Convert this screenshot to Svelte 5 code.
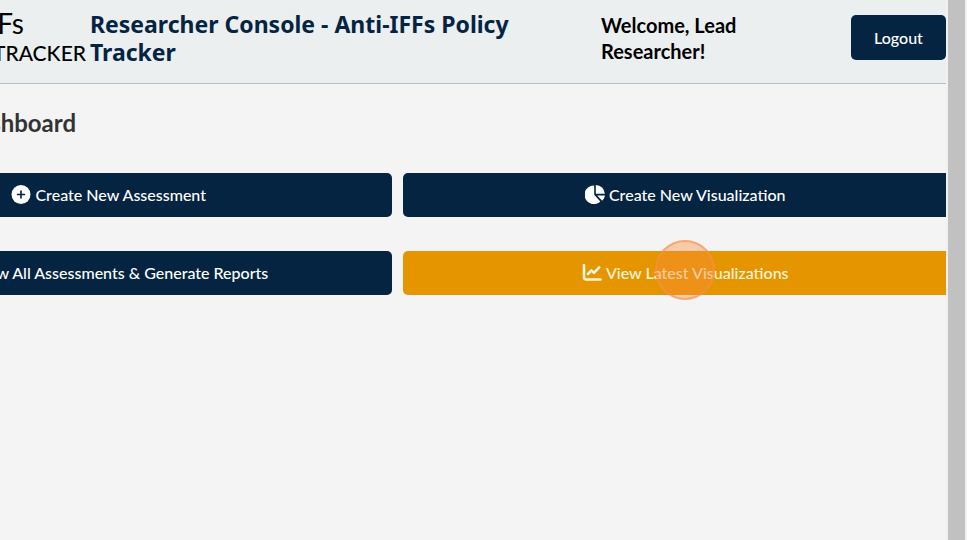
<script>
  const actions = [
    { id: 'create', label: 'Create New Assessment', icon: 'plus' },
    { id: 'visualize', label: 'Create New Visualization', icon: 'pie' },
    { id: 'reports', label: 'View All Assessments & Generate Reports', icon: 'list' },
    { id: 'latest', label: 'View Latest Visualizations', icon: 'line' },
  ];

  let active = $state('latest');
</script>

<div class="screen">
  <div class="viewport">
    <header>
      <div class="logo">
        <span class="logo-top">IFFs</span>
        <span class="logo-bottom">TRACKER</span>
      </div>
      <h1>Researcher Console - Anti-IFFs Policy Tracker</h1>
      <p class="welcome">Welcome, Lead Researcher!</p>
      <button class="logout" type="button">Logout</button>
    </header>

    <main>
      <h2>Dashboard</h2>

      <div class="actions">
        {#each actions as action (action.id)}
          <button
            class="action"
            class:active={active === action.id}
            type="button"
            onclick={() => (active = action.id)}
          >
            <svg class="icon" viewBox="0 0 20 20" aria-hidden="true">
              {#if action.icon === 'plus'}
                <circle cx="10" cy="9.5" r="9.5" fill="currentColor" />
                <path d="M10 6v7M6.5 9.5h7" stroke="#042442" stroke-width="1.6" stroke-linecap="round" />
              {:else if action.icon === 'pie'}
                <path d="M9.2 .5V9.8L15.3 16.4A9.3 9.3 0 1 1 9.2 .5Z" fill="currentColor" />
                <path d="M10.8 0A9 9 0 0 1 19.8 8.7H10.8Z" fill="currentColor" />
                <path d="M12.2 10.4H20A9 9 0 0 1 17.2 15.8Z" fill="currentColor" />
              {:else if action.icon === 'list'}
                <path d="M1 3h3v3H1zM7 3h12v3H7zM1 9h3v3H1zM7 9h12v3H7zM1 15h3v3H1zM7 15h12v3H7z" fill="currentColor" />
              {:else}
                <g fill="none" stroke="currentColor" stroke-width="2.6" stroke-linecap="round" stroke-linejoin="round">
                  <path d="M2 2V14Q2 16.5 4.5 16.5H18.5" />
                  <path d="M6 11L9.4 7.4L12 9.8L17.2 4.4" />
                </g>
              {/if}
            </svg>
            <span>{action.label}</span>
            {#if action.id === 'latest'}
              <i class="pulse"></i>
            {/if}
          </button>
        {/each}
      </div>
    </main>
  </div>
  <div class="track"><div class="thumb"></div></div>
</div>

<style>
  :global(body) {
    margin: 0;
    background: #f4f4f4;
  }

  .screen {
    display: flex;
    min-height: 100vh;
    overflow: hidden;
    font-family: Lato, 'Liberation Sans', sans-serif;
  }

  .viewport {
    flex: 1;
    min-width: 0;
    overflow: hidden;
    background: #f4f4f4;
  }

  header {
    display: flex;
    align-items: flex-start;
    box-sizing: border-box;
    min-height: 84px;
    padding-top: 10px;
    background: #ebeff0;
    border-bottom: 1px solid #b8c0c6;
  }

  .logo {
    display: flex;
    flex-direction: column;
    flex: none;
    align-items: flex-end;
    width: 86px;
    color: #000;
    white-space: nowrap;
  }
  .logo-top {
    padding-right: 62px;
    font-size: 28px;
    line-height: 26px;
  }
  .logo-bottom {
    font-size: 21px;
    font-weight: 500;
    line-height: 34px;
  }

  h1 {
    flex: none;
    width: 440px;
    margin: 0 0 0 4px;
    color: #042442;
    font: bold 23px/28px 'Noto Sans', sans-serif;
  }

  .welcome {
    width: 150px;
    margin: 2px 0 0 71px;
    color: #000;
    font-size: 20px;
    font-weight: bold;
    line-height: 26px;
  }

  .logout {
    width: 95px;
    height: 45px;
    margin: 5px 0 0 auto;
    padding: 0;
    border: 0;
    border-radius: 5px;
    background: #042442;
    color: #fff;
    font: 500 16px/24px Lato, sans-serif;
    cursor: pointer;
  }

  main {
    margin: 0 -22px 0 -174px;
  }

  h2 {
    margin: 22px 0 33px 134px;
    color: #333;
    font-size: 24px;
    line-height: 34px;
  }

  .actions {
    display: grid;
    grid-template-columns: 1fr 1fr;
    gap: 34px 11px;
  }

  .action {
    position: relative;
    display: flex;
    align-items: center;
    justify-content: center;
    gap: 4px;
    height: 44px;
    padding: 0;
    border: 0;
    border-radius: 5px;
    background: #042442;
    color: #fff;
    font: 500 16px/24px Lato, sans-serif;
    white-space: nowrap;
    cursor: pointer;
  }
  .action.active {
    background: #e59500;
    color: #fff6dc;
  }

  .icon {
    flex: none;
    width: 20px;
    height: 20px;
  }

  /* Click marker centred over the button */
  .pulse {
    position: absolute;
    top: 19px;
    left: 50%;
    box-sizing: border-box;
    width: 60px;
    height: 60px;
    border: 2px solid rgba(246, 146, 72, 0.6);
    border-radius: 50%;
    background: rgba(250, 140, 60, 0.4);
    transform: translate(-50%, -50%);
    pointer-events: none;
  }

  .track {
    flex: none;
    width: 17px;
    padding: 0 2px;
    background: #f1f1f1;
  }
  .thumb {
    height: 100%;
    background: #c1c1c1;
  }
</style>
